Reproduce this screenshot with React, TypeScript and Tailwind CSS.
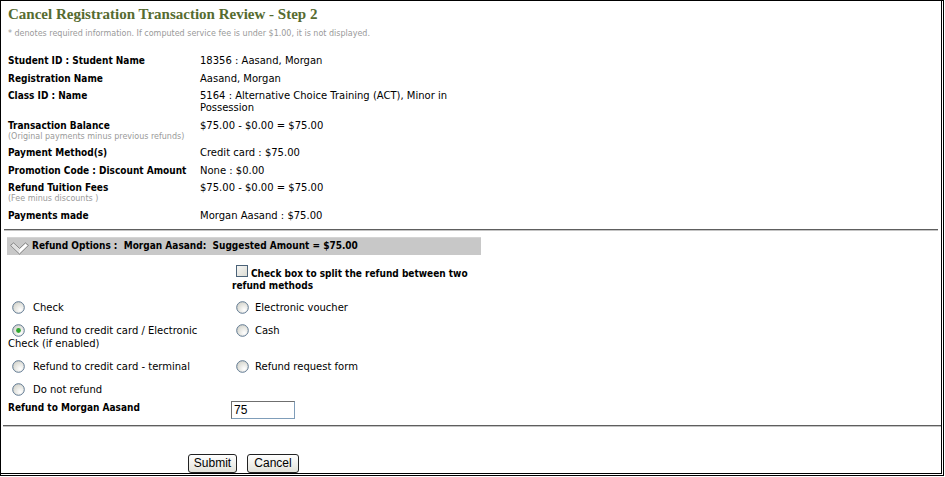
import React from "react";

const LBL = "font-['DejaVu_Sans_Condensed','Liberation_Sans',sans-serif] font-bold text-[10px] leading-[12px] text-black";
const VAL = "font-['DejaVu_Sans','Verdana',sans-serif] text-[10px] leading-[12px] text-black";
const SUB = "font-['DejaVu_Sans','Verdana',sans-serif] text-[8px] leading-[10px] text-[#9a9a9a]";

function Radio({ checked = false }: { checked?: boolean }) {
  return (
    <svg width="13" height="13" viewBox="0 0 13 13" className="inline-block align-top">
      <defs>
        <radialGradient id={checked ? "rgc" : "rg"} cx="0.65" cy="0.7" r="0.7">
          <stop offset="0" stopColor="#ffffff" />
          <stop offset="1" stopColor="#d6d6ce" />
        </radialGradient>
      </defs>
      <circle cx="6.5" cy="6.5" r="5.8" fill={`url(#${checked ? "rgc" : "rg"})`} stroke="#5f7891" strokeWidth="1" />
      {checked && <circle cx="6.5" cy="6.5" r="2.4" fill="#2fa82f" />}
    </svg>
  );
}

function Row({ label, sub, children }: { label: string; sub?: string; children: React.ReactNode }) {
  return (
    <div className="flex">
      <div className="w-[192px] shrink-0">
        <div className={LBL}>{label}</div>
        {sub && <div className={SUB}>{sub}</div>}
      </div>
      <div className={VAL}>{children}</div>
    </div>
  );
}

function Hr({ className = "" }: { className?: string }) {
  return <div className={"h-[2px] border-t border-[#5e5e5e] border-b border-b-[#c4c4c4] " + className} />;
}

export default function App() {
  return (
    <div className="w-[945px] h-[477px] bg-white">
      <div className="w-[944px] h-[476px] border-l border-t border-r-[3px] border-b-[3px] border-double border-black flex flex-col">
        <div className="pl-[7px] pt-[4px]">
          <div className="font-['Liberation_Serif','Times_New_Roman',serif] font-bold text-[15px] leading-[18px] text-[#566b30]">
            Cancel Registration Transaction Review - Step 2
          </div>
          <div className={SUB + " mt-[6px] text-[#8e8e8e]"}>
            * denotes required information. If computed service fee is under $1.00, it is not displayed.
          </div>
          <div className="mt-[16px] flex flex-col gap-[5.5px]">
            <Row label="Student ID : Student Name">18356 : Aasand, Morgan</Row>
            <Row label="Registration Name">Aasand, Morgan</Row>
            <Row label="Class ID : Name">
              5164 : Alternative Choice Training (ACT), Minor in
              <br />
              Possession
            </Row>
            <Row label="Transaction Balance" sub="(Original payments minus previous refunds)">
              $75.00 - $0.00 = $75.00
            </Row>
            <Row label="Payment Method(s)">Credit card : $75.00</Row>
            <Row label="Promotion Code : Discount Amount">None : $0.00</Row>
            <Row label="Refund Tuition Fees" sub="(Fee minus discounts )">
              $75.00 - $0.00 = $75.00
            </Row>
            <Row label="Payments made">Morgan Aasand : $75.00</Row>
          </div>
        </div>

        <Hr className="mt-[7px] mx-[3px]" />

        <div className="ml-[6px] w-[474px] mt-[6px]">
          <div className="h-[18px] bg-[#c8c8c8] flex items-center border-t border-[#d4d4d4]">
            <svg width="19" height="13" viewBox="0 0 19 13" className="ml-[3px] mr-[3px] mt-[4px]">
              <polygon points="0.6,3.4 3.6,1 9.5,6.6 15.4,1 18.4,3.4 9.5,12" fill="#ffffff" stroke="#6e6e6e" strokeWidth="0.9" />
              <polygon points="3.6,2.2 9.5,7.8 9.5,10.6 1.8,3.6" fill="#dedede" />
            </svg>
            <span className={LBL}>Refund Options :&nbsp; Morgan Aasand:&nbsp; Suggested Amount = $75.00</span>
          </div>

          <div className="flex mt-[10px]">
            <div className="w-[225px] shrink-0" />
            <div className={LBL}>
              <div className="flex items-start">
                <span className="inline-block w-[12px] h-[12px] ml-[4px] mr-[3px] border border-[#4b6278] bg-gradient-to-br from-[#f6f6f4] to-[#dcdcd4]" />
                <span className="pt-[3px]">Check box to split the refund between two</span>
              </div>
              <div>refund methods</div>
            </div>
          </div>

          <div className={VAL + " leading-[13px] mt-[4.5px]"}>
            <div className="flex py-[5px]">
              <div className="w-[225px] shrink-0 pl-[1px]">
                <span className="ml-[4px] mr-[8px] inline-block align-top"><Radio /></span>Check
              </div>
              <div>
                <span className="ml-[4px] mr-[6px] inline-block align-top"><Radio /></span>Electronic voucher
              </div>
            </div>
            <div className="flex py-[5px]">
              <div className="w-[225px] shrink-0 pl-[1px]">
                <span className="ml-[4px] mr-[8px] inline-block align-top"><Radio checked /></span>Refund to credit card / Electronic
                <br />
                Check (if enabled)
              </div>
              <div>
                <span className="ml-[4px] mr-[6px] inline-block align-top"><Radio /></span>Cash
              </div>
            </div>
            <div className="flex py-[5px]">
              <div className="w-[225px] shrink-0 pl-[1px]">
                <span className="ml-[4px] mr-[8px] inline-block align-top"><Radio /></span>Refund to credit card - terminal
              </div>
              <div>
                <span className="ml-[4px] mr-[6px] inline-block align-top"><Radio /></span>Refund request form
              </div>
            </div>
            <div className="flex py-[5px]">
              <div className="w-[225px] shrink-0 pl-[1px]">
                <span className="ml-[4px] mr-[8px] inline-block align-top"><Radio /></span>Do not refund
              </div>
            </div>
          </div>

          <div className="flex items-start">
            <div className={LBL + " w-[224px] shrink-0 pl-[1px] pt-[1px]"}>Refund to Morgan Aasand</div>
            <div className="w-[64px] h-[18px] border border-[#7f9db9] border-t-[#6f6f6f] border-l-[#6f6f6f] flex items-center pl-[2px] font-['Liberation_Sans','Arial',sans-serif] text-[12px] text-black">
              75
            </div>
          </div>
        </div>

        <Hr className="mt-[6px] ml-[2px] mr-0" />

        <div className="mt-[27px] pl-[187px] flex gap-[10px]">
          <button className="w-[49px] h-[19px] rounded-[3px] border border-[#222] bg-gradient-to-b from-[#ffffff] to-[#e2e2da] font-['Liberation_Sans','Arial',sans-serif] text-[12px] leading-[17px] text-black">
            Submit
          </button>
          <button className="w-[52px] h-[19px] rounded-[3px] border border-[#222] bg-gradient-to-b from-[#ffffff] to-[#e2e2da] font-['Liberation_Sans','Arial',sans-serif] text-[12px] leading-[17px] text-black">
            Cancel
          </button>
        </div>
      </div>
    </div>
  );
}
